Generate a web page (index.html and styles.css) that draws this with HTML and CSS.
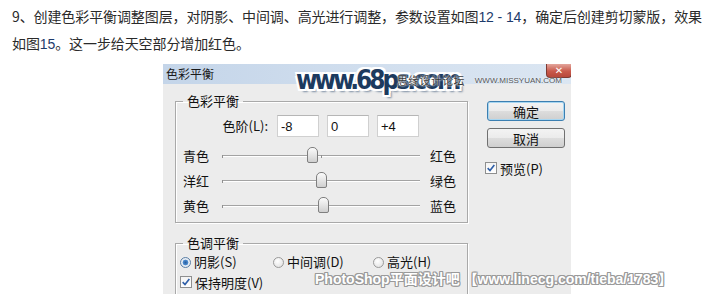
FILE: index.html
```html
<!DOCTYPE html>
<html lang="zh-CN">
<head>
<meta charset="utf-8">
<title>色彩平衡</title>
<link rel="stylesheet" href="styles.css">
</head>
<body>
<p class="intro">9、创建色彩平衡调整图层，对阴影、中间调、高光进行调整，参数设置如图<span class="num">12 - 14</span>，确定后创建剪切蒙版，效果<br>如图<span class="num">15</span>。这一步给天空部分增加红色。</p>

<div class="dialog">
  <div class="titlebar">
    <span class="title">色彩平衡</span>
    <span class="close">✕</span>
  </div>
  <div class="dlg-body">
    <div class="left-col">
      <fieldset class="group g1">
        <legend>色彩平衡</legend>
        <div class="levels">
          <label class="lv-label">色阶(L):</label>
          <input class="lv-input" type="text" value="-8">
          <input class="lv-input" type="text" value="0">
          <input class="lv-input" type="text" value="+4">
        </div>
        <div class="slider-row">
          <span class="s-left">青色</span>
          <div class="track"><span class="thumb" style="left:85px"></span></div>
          <span class="s-right">红色</span>
        </div>
        <div class="slider-row">
          <span class="s-left">洋红</span>
          <div class="track"><span class="thumb" style="left:94px"></span></div>
          <span class="s-right">绿色</span>
        </div>
        <div class="slider-row">
          <span class="s-left">黄色</span>
          <div class="track"><span class="thumb" style="left:96px"></span></div>
          <span class="s-right">蓝色</span>
        </div>
      </fieldset>
      <fieldset class="group g2">
        <legend>色调平衡</legend>
        <div class="radios">
          <span class="radio-item r1"><span class="radio on"></span>阴影(S)</span>
          <span class="radio-item r2"><span class="radio"></span>中间调(D)</span>
          <span class="radio-item"><span class="radio"></span>高光(H)</span>
        </div>
        <div class="check-row">
          <span class="checkbox"><svg viewBox="0 0 12 12" width="10" height="10"><path d="M2 6.2 L4.8 9 L10 2.5" fill="none" stroke="#2f5fa8" stroke-width="2"/></svg></span>保持明度(V)
        </div>
      </fieldset>
    </div>
    <div class="right-col">
      <button class="btn default">确定</button>
      <button class="btn">取消</button>
      <div class="preview-row">
        <span class="checkbox"><svg viewBox="0 0 12 12" width="10" height="10"><path d="M2 6.2 L4.8 9 L10 2.5" fill="none" stroke="#2f5fa8" stroke-width="2"/></svg></span>预览(P)
      </div>
    </div>
  </div>
</div>

<div class="wm wm-68">www.68ps.com</div>
<div class="wm wm-missyuan"><span class="wm-cn">思缘设计论坛</span><span class="wm-en">WWW.MISSYUAN.COM</span></div>
<div class="wm wm-linecg">PhotoShop平面设计吧 【www.linecg.com/tieba/1783】</div>
</body>
</html>
```

FILE: styles.css
```css
html, body {
  margin: 0;
  padding: 0;
}
body {
  position: relative;
  width: 722px;
  height: 294px;
  overflow: hidden;
  background: #ffffff;
  font-family: "Noto Sans CJK SC", "Liberation Sans", sans-serif;
}

.intro {
  margin: 0;
  padding: 3px 0 0 12px;
  height: 58px;
  box-sizing: border-box;
  font-size: 14px;
  line-height: 26px;
  color: #2a2a2a;
  white-space: nowrap;
  letter-spacing: -0.1px;
}
.num {
  font-family: "Liberation Sans", sans-serif;
  color: #1d3b6b;
}

.dialog {
  margin: 6px 0 0 163px;
  width: 408px;
  height: 240px;
  background: #ececec;
  overflow: hidden;
  font-size: 13px;
  color: #111;
}

.titlebar {
  height: 20px;
  display: flex;
  justify-content: space-between;
  align-items: flex-start;
  background: linear-gradient(to right, #c4d5e9, #d3e0ef 60%, #dbe6f2);
}
.title {
  font-size: 12px;
  line-height: 20px;
  padding-left: 3px;
  color: #1a1a1a;
}
.close {
  width: 26px;
  height: 14px;
  margin-right: -1px;
  box-sizing: border-box;
  border: 1px solid #7d3a32;
  border-top: none;
  border-radius: 0 0 4px 4px;
  background: linear-gradient(#e3a69c, #c95a4c 55%, #b8483b);
  color: #fff;
  font-family: "DejaVu Sans", sans-serif;
  font-size: 10px;
  font-weight: bold;
  line-height: 13px;
  text-align: center;
}

.dlg-body {
  display: flex;
  padding: 9px 0 0 12px;
}
.left-col {
  width: 293px;
}
.group {
  margin: 0;
  padding: 0;
  border: 1px solid #a9a9a9;
  box-shadow: 1px 1px 0 #fff, inset 1px 1px 0 #fff;
  min-width: 0;
}
.group legend {
  margin-left: 7px;
  padding: 0 4px;
  font-size: 13px;
  line-height: 16px;
}

.levels {
  display: flex;
  align-items: center;
  gap: 8px;
  margin-top: 6px;
}
.lv-label {
  width: 92px;
  margin-right: 1px;
  text-align: right;
  line-height: 22px;
}
.lv-input {
  width: 42px;
  height: 22px;
  box-sizing: border-box;
  border: 1px solid #d0d0d0;
  border-top-color: #b6b6b6;
  background: #fff;
  padding: 0 0 0 3px;
  font-family: "Liberation Sans", sans-serif;
  font-size: 13px;
  color: #111;
  outline: none;
}

.slider-row {
  display: flex;
  align-items: center;
  height: 25px;
  padding-left: 7px;
}
.levels + .slider-row {
  margin-top: 6px;
}
.slider-row:last-child {
  margin-bottom: 4px;
}
.s-left {
  width: 39px;
}
.s-right {
  margin-left: 10px;
}
.track {
  position: relative;
  width: 198px;
  height: 0;
  border-top: 1px solid #a3a3a3;
  border-bottom: 1px solid #ffffff;
}
.track::before,
.track::after {
  content: "";
  position: absolute;
  top: -1px;
  width: 1px;
  height: 3px;
  background: #8f8f8f;
}
.track::before {
  left: 0;
}
.track::after {
  left: 99px;
}
.thumb {
  position: absolute;
  top: -9px;
  width: 11px;
  height: 16px;
  box-sizing: border-box;
  border: 1px solid #7f7f7f;
  border-radius: 5px 5px 2px 2px;
  background: linear-gradient(#fbfbfb, #e6e6e6 50%, #cfcfcf);
  z-index: 1;
}

.g2 {
  margin-top: 12px;
  height: 120px;
}
.radios {
  display: flex;
  align-items: center;
  height: 20px;
  padding-left: 4px;
  margin-top: 1px;
}
.radio-item {
  display: flex;
  align-items: center;
  line-height: 20px;
}
.r1 {
  width: 93px;
}
.r2 {
  width: 100px;
}
.radio {
  width: 11px;
  height: 11px;
  box-sizing: border-box;
  border-radius: 50%;
  border: 1px solid #9a9a9a;
  background: radial-gradient(circle at 40% 35%, #ffffff, #dcdcdc);
  margin-right: 3px;
}
.radio.on {
  border-color: #5b7fa6;
  background: radial-gradient(circle, #2a5f9e 0, #4f8fd4 2.6px, #e9eef4 3.2px, #dfe4ea 100%);
}

.check-row,
.preview-row {
  display: flex;
  align-items: center;
  height: 20px;
  padding-left: 4px;
}
.checkbox {
  display: flex;
  align-items: center;
  justify-content: center;
  width: 12px;
  height: 12px;
  box-sizing: border-box;
  border: 1px solid #8e8f8f;
  background: linear-gradient(#f4f4f4, #ffffff);
  margin-right: 3px;
}

.right-col {
  display: flex;
  flex-direction: column;
  margin-left: 19px;
  padding-top: 8px;
  width: 80px;
}
.btn {
  width: 78px;
  height: 20px;
  padding: 0;
  box-sizing: border-box;
  border: 1px solid #707070;
  border-radius: 3px;
  background: linear-gradient(#f3f3f3, #ebebeb 50%, #dddddd 51%, #cfcfcf);
  font-family: "Noto Sans CJK SC", sans-serif;
  font-size: 13px;
  line-height: 17px;
  color: #111;
}
.btn + .btn {
  margin-top: 7px;
}
.btn.default {
  border-color: #3c7fb1;
  box-shadow: inset 0 0 0 1px #a7d6f1;
}
.preview-row {
  margin-top: 10px;
  margin-left: -6px;
}

.wm {
  position: absolute;
  white-space: nowrap;
  pointer-events: none;
}
.wm-68 {
  left: 296px;
  top: 65px;
  font-family: "DejaVu Sans Condensed", "DejaVu Sans", sans-serif;
  font-weight: bold;
  font-size: 26px;
  letter-spacing: -3px;
  color: #1c3a5e;
  text-shadow: 1px 0 0 #fff, -1px 0 0 #fff, 0 1px 0 #fff, 0 -1px 0 #fff,
    2px 2px 0 #fff, -2px -2px 0 #fff, 2px -2px 0 #fff, -2px 2px 0 #fff,
    3px 3px 2px #7d8ea3;
}
.wm-missyuan {
  left: 397px;
  top: 72px;
  display: flex;
  align-items: center;
  gap: 10px;
}
.wm-cn {
  font-size: 11px;
  color: #3a3a3a;
  letter-spacing: 0.3px;
  text-shadow: 0 0 2px #fff, 0 0 2px #fff;
}
.wm-en {
  font-family: "Liberation Sans", sans-serif;
  font-size: 8px;
  color: #555;
  text-shadow: 0 0 2px #fff;
}
.wm-linecg {
  left: 315px;
  top: 268px;
  font-family: "Liberation Sans", "Noto Sans CJK SC", sans-serif;
  font-weight: bold;
  font-size: 14px;
  color: #ffffff;
  text-shadow: 1px 0 0 #9a9a9a, -1px 0 0 #9a9a9a, 0 1px 0 #9a9a9a, 0 -1px 0 #9a9a9a,
    1px 1px 0 #9a9a9a, -1px -1px 0 #9a9a9a, 1px -1px 0 #9a9a9a, -1px 1px 0 #9a9a9a;
}
```
